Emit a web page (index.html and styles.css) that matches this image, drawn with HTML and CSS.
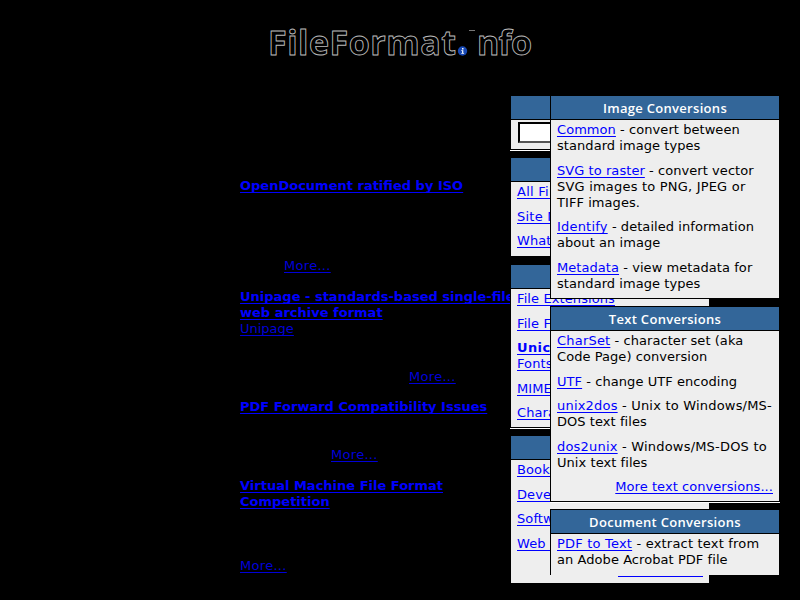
FILE: index.html
```html
<!DOCTYPE html>
<html lang="en">
<head>
<meta charset="utf-8">
<title>FileFormat.Info</title>
<link rel="stylesheet" href="styles.css">
</head>
<body>
<header class="masthead">
<svg class="logo" width="270" height="36" viewBox="0 0 270 36" role="img" aria-label="FileFormat.Info">
<text class="word" x="3" y="30" textLength="188" lengthAdjust="spacing">FileFormat</text>
<path class="serif" d="M204 5.500h6"/>
<text class="word" x="212" y="30" textLength="55" lengthAdjust="spacing">nfo</text>
<circle cx="197.500" cy="26" r="4.700" fill="#1849b5"/>
<path d="M197 23h1.500v1.500h-1.500zM196.300 25.300h2v2.700h.8v.8h-2.800v-.8h.8v-1.900h-.8z" fill="#fff"/>
</svg>
</header>
<main class="page">
<section class="news">
<article class="n1"><h3><a>OpenDocument ratified by ISO</a></h3><p class="more"><a>More...</a></p></article>
<article class="n2"><h3><a>Unipage - standards-based single-file<br>web archive format</a></h3><p><a class="plain">Unipage</a></p><p class="more"><a>More...</a></p></article>
<article class="n3"><h3><a>PDF Forward Compatibility Issues</a></h3><p class="more"><a>More...</a></p></article>
<article class="n4"><h3><a>Virtual Machine File Format<br>Competition</a></h3><p class="more"><a>More...</a></p></article>
</section>
<aside class="menu">
<section class="card search"><h2></h2><div class="body"><input type="text" aria-label="Search"></div></section>
<section class="card site"><h2></h2><div class="body"><p><a class="loose">All Files</a></p><p><a class="loose">Site Map</a></p><p><a>What's New</a></p></div></section>
<section class="card ref"><h2></h2><div class="body"><p><a>File Extensions</a></p><p><a>File Formats</a></p><p><a class="strong">Unicode</a><br><a>Fonts</a></p><p><a>MIME Types</a></p><p><a>Character Sets</a></p></div></section>
<section class="card res"><h2></h2><div class="body"><p><a>Books</a></p><p><a>Developer</a></p><p><a>Software</a></p><p><a>Web Sites</a></p><div class="rule"></div></div></section>
</aside>
<aside class="conversions">
<section class="card image"><h2>Image Conversions</h2><div class="body">
<p><a>Common</a> - convert between<br>standard image types</p>
<p><a>SVG to raster</a> - convert vector<br><span class="wide">SVG images to PNG, JPEG or</span><br>TIFF images.</p>
<p><a class="wide">Identify</a> - detailed information<br>about an image</p>
<p><a>Metadata</a> - view metadata for<br>standard image types</p></div></section>
<section class="card text"><h2>Text Conversions</h2><div class="body">
<p><a class="wide">CharSet</a> - character set (aka<br>Code Page) conversion</p>
<p><a>UTF</a> - change UTF encoding</p>
<p class="wide"><a>unix2dos</a> - Unix to Windows/MS-<br><span class="tight">DOS text files</span></p>
<p class="wide"><a>dos2unix</a> - Windows/MS-DOS to<br><span class="tight">Unix text files</span></p>
<p class="right"><a>More text conversions...</a></p></div></section>
<section class="card doc"><h2>Document Conversions</h2><div class="body">
<p class="wide"><a>PDF to Text</a> - extract text from<br><span class="tight">an Adobe Acrobat PDF file</span></p></div></section>
</aside>
</main>
</body>
</html>
```
FILE: styles.css
```css
* { box-sizing: border-box; }
body { margin: 0; width: 800px; height: 600px; overflow: hidden; background: #000; color: #000; font: 13px/16px Verdana, "DejaVu Sans", sans-serif; }
h2, h3, p { margin: 0; font-size: 13px; }
a { color: #00f; text-decoration: underline; text-decoration-thickness: 1px; text-underline-offset: 2px; text-decoration-skip-ink: none; }
.masthead { height: 95px; padding: 25px 0 0 265px; }
.logo { display: block; overflow: visible; }
.word { font: bold 34px "Open Sans", sans-serif; fill: #000; stroke: #bbb; stroke-width: .9; }
.serif { stroke: #777; }
.page { display: grid; grid-template-columns: 270px 40px 230px; padding-left: 240px; height: 505px; }
.news { padding-top: 83px; white-space: nowrap; }
.news p a { color: #0000d8; letter-spacing: .3px; }
.news p .plain { letter-spacing: 0; }
.n1 { height: 111px; } .n1 .more { padding: 64px 0 0 44px; }
.n2 { height: 110px; } .n2 .more { padding: 32px 0 0 169px; }
.n3 { height: 79px; } .n3 .more { padding: 32px 0 0 91px; }
.n4 .more { padding-top: 48px; }
.menu { width: 200px; position: relative; letter-spacing: .1px; }
.card { border: 1px solid #000; white-space: nowrap; }
.card h2 { height: 24px; background: #369; color: #fff; border-bottom: 1px solid #000; text-align: center; font: 600 13px/24px "Open Sans", sans-serif; letter-spacing: .3px; }
.body { background: #eee; padding: 2px 6px 0; }
.body p { margin-bottom: 8.5px; }
.menu .card { margin-bottom: 6px; }
.search { height: 55px; box-shadow: 0 1px #fff; }
.search .body { height: 29px; }
.search input { display: block; width: 160px; height: 21px; margin-left: 1px; border: 2px solid #000; border-bottom-color: #555; background: #fff; }
.menu .site { height: 100px; margin: 0 0 7px; }
.menu .search { margin-bottom: 7px; }
.site .body { height: 74px; }
.ref { height: 164px; box-shadow: 0 1px #fff; }
.menu .ref { margin-bottom: 7px; }
.ref .body { height: 138px; }
.res { height: 149px; }
.res .body { height: 123px; }
.strong { font-weight: bold; letter-spacing: .4px; }
.loose { letter-spacing: .25px; }
.rule { width: 85px; height: 1px; margin: 24px 0 0 101px; background: #00f; }
.conversions { position: relative; letter-spacing: .06px; }
.wide { letter-spacing: .2px; }
.tight { letter-spacing: .06px; }
.image { height: 204px; margin-bottom: 7px; }
.image .body { height: 178px; }
.text { height: 196px; margin-bottom: 7px; box-shadow: 0 1px #fff; }
.text .body { height: 170px; }
.doc { border-bottom: 0; }
.doc .body { height: 41px; }
.right { text-align: right; }
```
